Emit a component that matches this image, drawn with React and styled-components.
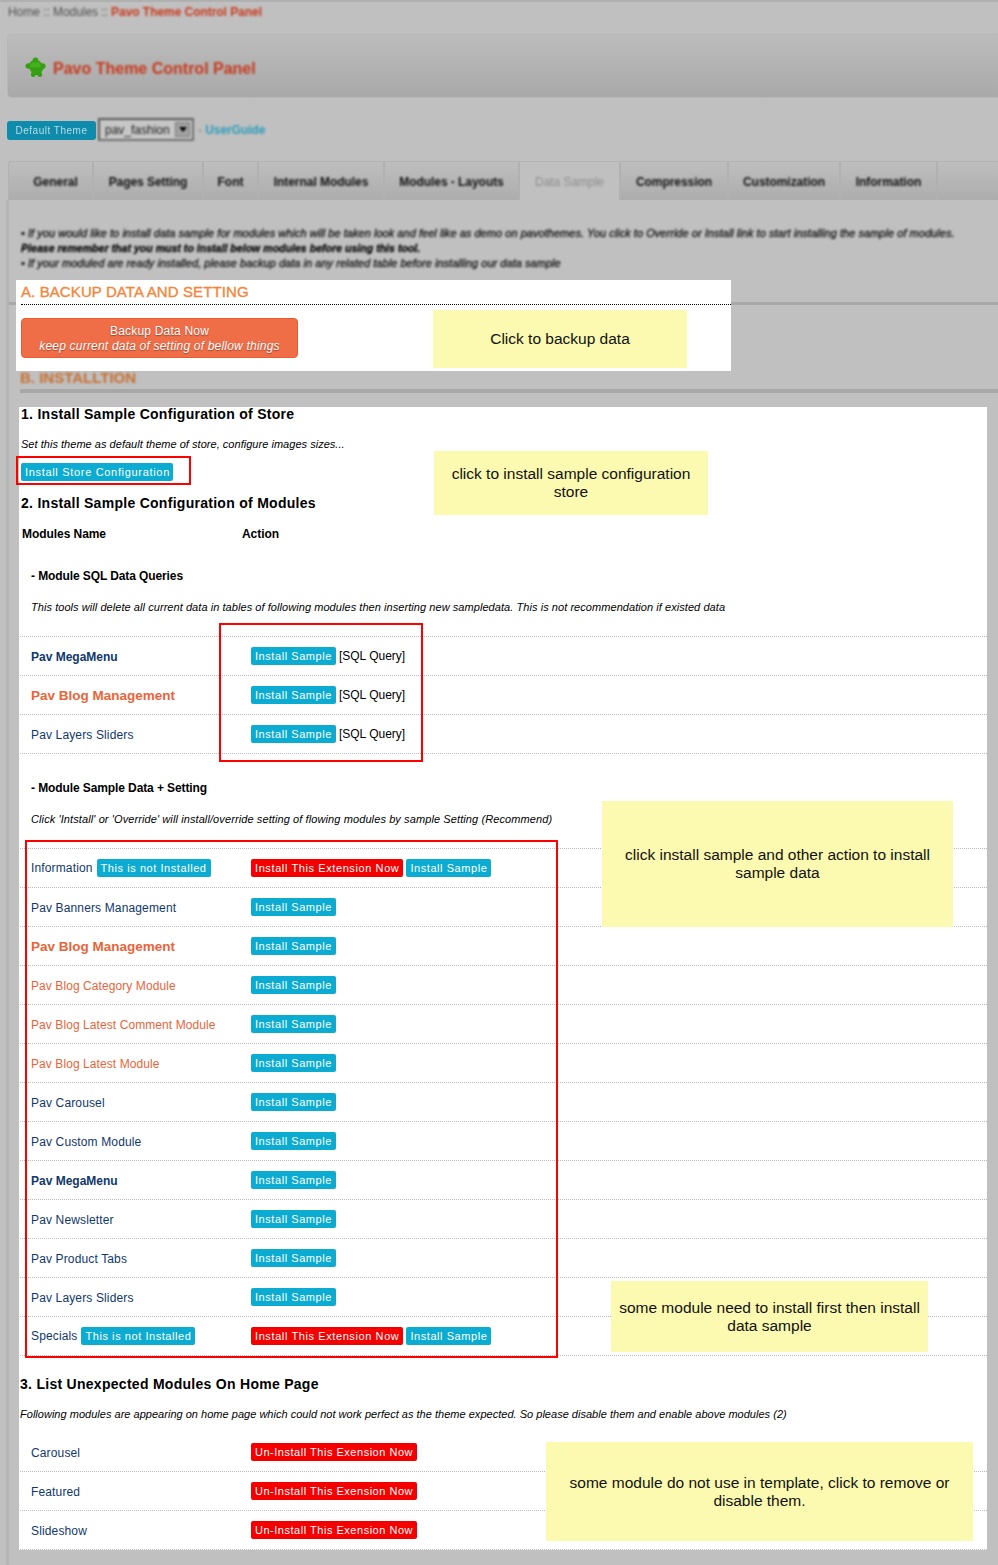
import React from "react";
import styled, { createGlobalStyle } from "styled-components";

const Global = createGlobalStyle`
  html, body { margin: 0; padding: 0; background: #c0c0c0; }
  body { font-family: "Liberation Sans", Arial, sans-serif; color: #000; }
  * { box-sizing: border-box; }
`;

const Page = styled.div`
  position: relative;
  width: 998px;
  height: 1565px;
  overflow: hidden;
  background: #c0c0c0;
  border-top: 2px solid #b0b0b0;
`;
const Breadcrumb = styled.div`
  height: 22px;
  line-height: 20px;
  padding-left: 8px;
  font-size: 12px;
  letter-spacing: -0.05px;
  color: #505050;
  filter: blur(0.9px);
  b { font-weight: bold; color: #c8391c; }
`;
const Header = styled.div`
  height: 64px;
  margin: 10px 0 0 7px;
  padding: 6px 0 0 17px;
  display: flex;
  align-items: center;
  gap: 7px;
  border: 1px solid #b6b6b6;
  border-right: 0;
  border-radius: 5px 0 0 5px;
  background: linear-gradient(#bcbcbc, #a9a9a9);
`;
const HeaderTitle = styled.h1`
  margin: 0;
  font-size: 16px;
  font-weight: bold;
  color: #c8391c;
  filter: blur(0.8px);
`;
const Icon = styled.svg`
  width: 21px;
  height: 21px;
  margin-top: -4px;
  filter: blur(0.5px);
`;
const ThemeRow = styled.div`
  display: flex;
  align-items: center;
  height: 23px;
  margin: 20px 0 0 7px;
  font-size: 12px;
`;
const ThemeBadge = styled.span`
  width: 89px;
  height: 19px;
  margin-top: 2px;
  line-height: 19px;
  text-align: center;
  font-size: 10px;
  letter-spacing: 0.5px;
  border-radius: 3px;
  color: #b5dde8;
  background: #0f8bab;
  filter: blur(0.7px);
`;
const SelectBox = styled.div`
  display: flex;
  align-items: center;
  justify-content: space-between;
  width: 96px;
  height: 23px;
  margin-left: 2px;
  padding: 0 2px 0 5px;
  border: 2px solid;
  border-color: #5a5a5a #707070 #707070 #5a5a5a;
  background: #c6c6c6;
  font-size: 12px;
  color: #222;
  filter: blur(0.8px);
`;
const SelectArrow = styled.span`
  width: 15px;
  height: 15px;
  background: #a2a2a2;
  border: 1px solid #777;
  display: flex;
  align-items: center;
  justify-content: center;
  &::after {
    content: "";
    border: 4px solid transparent;
    border-top: 5px solid #000;
    border-bottom: 0;
  }
`;
const GuideLink = styled.span`
  margin-left: 4px;
  color: #7a7a7a;
  letter-spacing: -0.05px;
  filter: blur(0.8px);
  b { font-weight: bold; color: #2a9dbb; }
`;
const Tabs = styled.div`
  display: flex;
  height: 39px;
  margin: 20px 0 0 8px;
  padding-left: 2px;
  border: 1px solid #b3b3b3;
  border-right: 0;
  border-bottom: 0;
  border-radius: 3px 0 0 0;
  background: linear-gradient(#bebebe, #adadad);
`;
const Tab = styled.div`
  width: ${(p) => p.$w}px;
  padding-left: ${(p) => p.$pad || 0}px;
  line-height: 41px;
  text-align: center;
  font-size: 12px;
  font-weight: ${(p) => (p.$active ? "normal" : "bold")};
  color: ${(p) => (p.$active ? "#8d8d8d" : "#111")};
  background: ${(p) => (p.$active ? "#c0c0c0" : "none")};
  border-right: 2px solid #b1b1b1;
  span { display: inline-block; filter: blur(0.8px); letter-spacing: -0.05px; }
`;
const Frame = styled.div`
  margin-left: 6px;
  height: 1400px;
  padding-top: 26px;
  border-left: 3px solid #b4b4b4;
`;
const Intro = styled.div`
  margin-left: 12px;
  font-size: 11px;
  letter-spacing: 0.04px;
  line-height: 15px;
  font-style: italic;
  color: #111;
  white-space: nowrap;
  filter: blur(0.8px);
  -webkit-text-stroke: 0.3px #111;
  b { font-weight: bold; color: #000; font-size: 10.5px; }
`;
const SectionA = styled.section`
  margin-top: 9px;
  padding-left: 7px;
  background: linear-gradient(#a8a8a8, #a8a8a8) 0 22px / 100% 3px no-repeat;
`;
const PanelA = styled.div`
  width: 715px;
  height: 91px;
  background: #fff;
`;
const TitleA = styled.h2`
  height: 25px;
  margin: 0 0 0 5px;
  line-height: 23px;
  font-size: 15px;
  letter-spacing: 0.1px;
  font-weight: normal;
  color: #f5853a;
  border-bottom: 1px dotted #000;
  white-space: nowrap;
  -webkit-text-stroke: 0.35px #f5853a;
`;
const BackupButton = styled.div`
  width: 277px;
  height: 40px;
  margin: 13px 0 0 5px;
  padding-top: 5px;
  border: 1px solid #e85c2f;
  border-radius: 4px;
  background: #ef6d47;
  color: #fff;
  text-align: center;
  font-size: 12px;
  letter-spacing: 0.2px;
  line-height: 15px;
  text-shadow: 0 1px 1px rgba(0, 0, 0, 0.35);
  i { display: block; letter-spacing: 0.2px; }
`;
const TitleB = styled.h2`
  height: 22px;
  margin: 0 0 0 11px;
  font-size: 15px;
  line-height: 14px;
  font-weight: bold;
  color: #c8702f;
  border-bottom: 4px solid #a8a8a8;
  span { display: inline-block; filter: blur(0.8px); }
`;
const PanelB = styled.div`
  width: 968px;
  height: 1143px;
  margin: 14px 0 0 10px;
  background: #fff;
  overflow: hidden;
`;
const SectionTitle = styled.h3`
  margin: ${(p) => p.$top || 0}px 0 0 ${(p) => p.$left ?? 2}px;
  font-size: 14px;
  line-height: 14px;
  font-weight: bold;
  letter-spacing: 0.28px;
  color: #000;
`;
const Hint = styled.p`
  margin: ${(p) => p.$top}px 0 0 ${(p) => p.$left}px;
  font-size: 11px;
  letter-spacing: ${(p) => p.$sp}px;
  line-height: 14px;
  font-style: italic;
  color: #000;
  white-space: nowrap;
`;
const TableHead = styled.div`
  display: grid;
  grid-template-columns: 220px auto;
  justify-content: start;
  margin: 17px 0 0 3px;
  font-size: 12px;
  letter-spacing: -0.06px;
  line-height: 14px;
  font-weight: bold;
`;
const GroupTitle = styled.div`
  margin: ${(p) => p.$top}px 0 0 12px;
  font-size: 12px;
  letter-spacing: -0.1px;
  line-height: 14px;
  font-weight: bold;
`;
const Rows = styled.div`
  margin: ${(p) => p.$top}px 0 0 1px;
  border-top: ${(p) => (p.$open ? "0" : "1px dotted #bbb")};
`;
const Row = styled.div`
  display: grid;
  grid-template-columns: 220px 1fr;
  align-items: center;
  height: 39px;
  padding-left: 11px;
  border-bottom: 1px dotted #bbb;
`;
const isBold = (k) => k === "blog" || k === "strong";
const Name = styled.div`
  display: flex;
  align-items: center;
  gap: 4px;
  font-size: ${(p) => (p.$kind === "blog" ? 13.5 : 12)}px;
  letter-spacing: ${(p) => (isBold(p.$kind) ? 0 : p.$kind === "sub" ? 0.08 : 0.14)}px;
  font-weight: ${(p) => (isBold(p.$kind) ? "bold" : "normal")};
  color: ${(p) => (p.$kind === "blog" || p.$kind === "sub" ? "#e9643a" : "#10376b")};
  white-space: nowrap;
  margin-top: ${(p) => (p.$flush ? -1 : p.$kind === "blog" ? 0 : 1)}px;
`;
const Actions = styled.div`
  display: flex;
  align-items: center;
  gap: 3px;
  margin-top: -1px;
  font-size: 12px;
  white-space: nowrap;
`;
const Label = styled.span`
  display: inline-block;
  height: 18px;
  padding: 0 4px;
  line-height: 18px;
  font-size: 11px;
  letter-spacing: ${(p) => p.$sp ?? 0.56}px;
  border-radius: 2px;
  color: #fff;
  white-space: nowrap;
  background: ${(p) => (p.$red ? "#f40000" : "#0cacd2")};
`;
const StoreButton = styled(Label)`
  display: block;
  width: 152px;
  letter-spacing: 0.68px;
  margin: 12px 0 0 2px;
`;
const Note = styled.div`
  position: absolute;
  left: ${(p) => p.$x}px;
  top: ${(p) => p.$y}px;
  width: ${(p) => p.$w}px;
  height: ${(p) => p.$h}px;
  padding: 0 5px;
  display: flex;
  align-items: center;
  justify-content: center;
  text-align: center;
  font-size: 15.5px;
  line-height: 18px;
  color: #111;
  background: #fcf9b0;
`;
const RedBox = styled.div`
  position: absolute;
  left: ${(p) => p.$x}px;
  top: ${(p) => p.$y}px;
  width: ${(p) => p.$w}px;
  height: ${(p) => p.$h}px;
  border: 2px solid #f00;
`;

const tabs = [
  ["General", 83, 8], ["Pages Setting", 110], ["Font", 55], ["Internal Modules", 126],
  ["Modules - Layouts", 135], ["Data Sample", 101, 0, true], ["Compression", 108],
  ["Customization", 112], ["Information", 97],
];
const SAMPLE = "Install Sample";
const sqlRows = [["Pav MegaMenu", "strong"], ["Pav Blog Management", "blog"], ["Pav Layers Sliders"]];
const sampleRows = [
  ["Information", "", true], ["Pav Banners Management"], ["Pav Blog Management", "blog"],
  ["Pav Blog Category Module", "sub"], ["Pav Blog Latest Comment Module", "sub"], ["Pav Blog Latest Module", "sub"],
  ["Pav Carousel"], ["Pav Custom Module"], ["Pav MegaMenu", "strong"], ["Pav Newsletter"],
  ["Pav Product Tabs"], ["Pav Layers Sliders"], ["Specials", "", true],
];

function PuzzleIcon() {
  return (
    <Icon viewBox="0 0 21 21" aria-hidden="true">
      <path
        fill="#34a012"
        d="M10.500 0.500c1.800 0 3 1.100 2.800 3 1.600.5 2.700 1.500 3.200 3 1.600-.7 3.500.2 4 2 .4 1.600-.6 3.200-2.400 3.500-.3 1.400-.9 2.500-1.800 3.300.7.900 1 2 .7 3.100-.4 1.300-1.800 1.800-3.100 1.300-.8-.3-1.400-1-1.500-1.700-.6.200-1.200.200-1.800 0-.1.700-.7 1.400-1.500 1.700-1.300.5-2.700 0-3.100-1.300-.3-1.100 0-2.200.7-3.100-.9-.8-1.500-1.900-1.800-3.300C1.100 11.700.1 10.100.5 8.500c.5-1.800 2.400-2.700 4-2 .5-1.500 1.600-2.500 3.200-3-.2-1.900 1-3 2.800-3z"
      />
      <path fill="#7fd84a" opacity="0.25" d="M6 6.500c2-1.800 7-1.800 9 0 .8 1.200.8 2.500.5 3.500-3 1-7.500 1-10.500 0-.3-1 .2-2.300 1-3.500z" />
    </Icon>
  );
}

export default function App() {
  return (
    <>
      <Global />
      <Page>
        <Breadcrumb>Home :: Modules :: <b>Pavo Theme Control Panel</b></Breadcrumb>
        <Header>
          <PuzzleIcon />
          <HeaderTitle>Pavo Theme Control Panel</HeaderTitle>
        </Header>
        <ThemeRow>
          <ThemeBadge>Default Theme</ThemeBadge>
          <SelectBox>pav_fashion<SelectArrow /></SelectBox>
          <GuideLink>- <b>UserGuide</b></GuideLink>
        </ThemeRow>
        <Tabs>
          {tabs.map(([t, w, pad, active]) => (
            <Tab key={t} $w={w} $pad={pad} $active={active}><span>{t}</span></Tab>
          ))}
        </Tabs>
        <Frame>
          <Intro>
            • If you would like to install data sample for modules which will be taken look and feel like as demo on pavothemes. You click to Override or Install link to start installing the sample of modules.<br />
            <b>Please remember that you must to install below modules before using this tool.</b><br />
            • If your moduled are ready installed, please backup data in any related table before installing our data sample
          </Intro>
          <SectionA>
            <PanelA>
              <TitleA>A. BACKUP DATA AND SETTING</TitleA>
              <BackupButton>Backup Data Now<i>keep current data of setting of bellow things</i></BackupButton>
            </PanelA>
          </SectionA>
          <TitleB><span>B. INSTALLTION</span></TitleB>
          <PanelB>
            <SectionTitle>1. Install Sample Configuration of Store</SectionTitle>
            <Hint $top={16} $left={2} $sp={0.03}>Set this theme as default theme of store, configure images sizes...</Hint>
            <StoreButton>Install Store Configuration</StoreButton>
            <SectionTitle $top={15}>2. Install Sample Configuration of Modules</SectionTitle>
            <TableHead><span>Modules Name</span><span>Action</span></TableHead>
            <GroupTitle $top={28}>- Module SQL Data Queries</GroupTitle>
            <Hint $top={17} $left={12} $sp={0.06}>This tools will delete all current data in tables of following modules then inserting new sampledata. This is not recommendation if existed data</Hint>
            <Rows $top={22}>
              {sqlRows.map(([n, k]) => (
                <Row key={n}>
                  <Name $kind={k}>{n}</Name>
                  <Actions><Label>{SAMPLE}</Label>[SQL Query]</Actions>
                </Row>
              ))}
            </Rows>
            <GroupTitle $top={27}>- Module Sample Data + Setting</GroupTitle>
            <Hint $top={17} $left={12} $sp={0.1}>Click 'Intstall' or 'Override' will install/override setting of flowing modules by sample Setting (Recommend)</Hint>
            <Rows $top={22}>
              {sampleRows.map(([n, k, missing]) => (
                <Row key={n + k}>
                  <Name $kind={k} $flush={missing}>{n}{missing && <Label>This is not Installed</Label>}</Name>
                  <Actions>
                    {missing && <Label $red $sp={0.6}>Install This Extension Now</Label>}
                    <Label>{SAMPLE}</Label>
                  </Actions>
                </Row>
              ))}
            </Rows>
            <SectionTitle $top={21} $left={1}>3. List Unexpected Modules On Home Page</SectionTitle>
            <Hint $top={16} $left={1} $sp={0.02}>Following modules are appearing on home page which could not work perfect as the theme expected. So please disable them and enable above modules (2)</Hint>
            <Rows $top={12} $open>
              {["Carousel", "Featured", "Slideshow"].map((n) => (
                <Row key={n}>
                  <Name>{n}</Name>
                  <Actions><Label $red $sp={0.52}>Un-Install This Exension Now</Label></Actions>
                </Row>
              ))}
            </Rows>
          </PanelB>
        </Frame>
        <Note $x={433} $y={308} $w={254} $h={58}>Click to backup data</Note>
        <Note $x={434} $y={449} $w={274} $h={64}>click to install sample configuration store</Note>
        <Note $x={602} $y={799} $w={351} $h={126}>click install sample and other action to install sample data</Note>
        <Note $x={611} $y={1279} $w={317} $h={71}>some module need to install first then install data sample</Note>
        <Note $x={546} $y={1440} $w={427} $h={99}>some module do not use in template, click to remove or disable them.</Note>
        <RedBox $x={16} $y={454} $w={175} $h={29} />
        <RedBox $x={219} $y={621} $w={204} $h={139} />
        <RedBox $x={25} $y={838} $w={533} $h={518} />
      </Page>
    </>
  );
}
